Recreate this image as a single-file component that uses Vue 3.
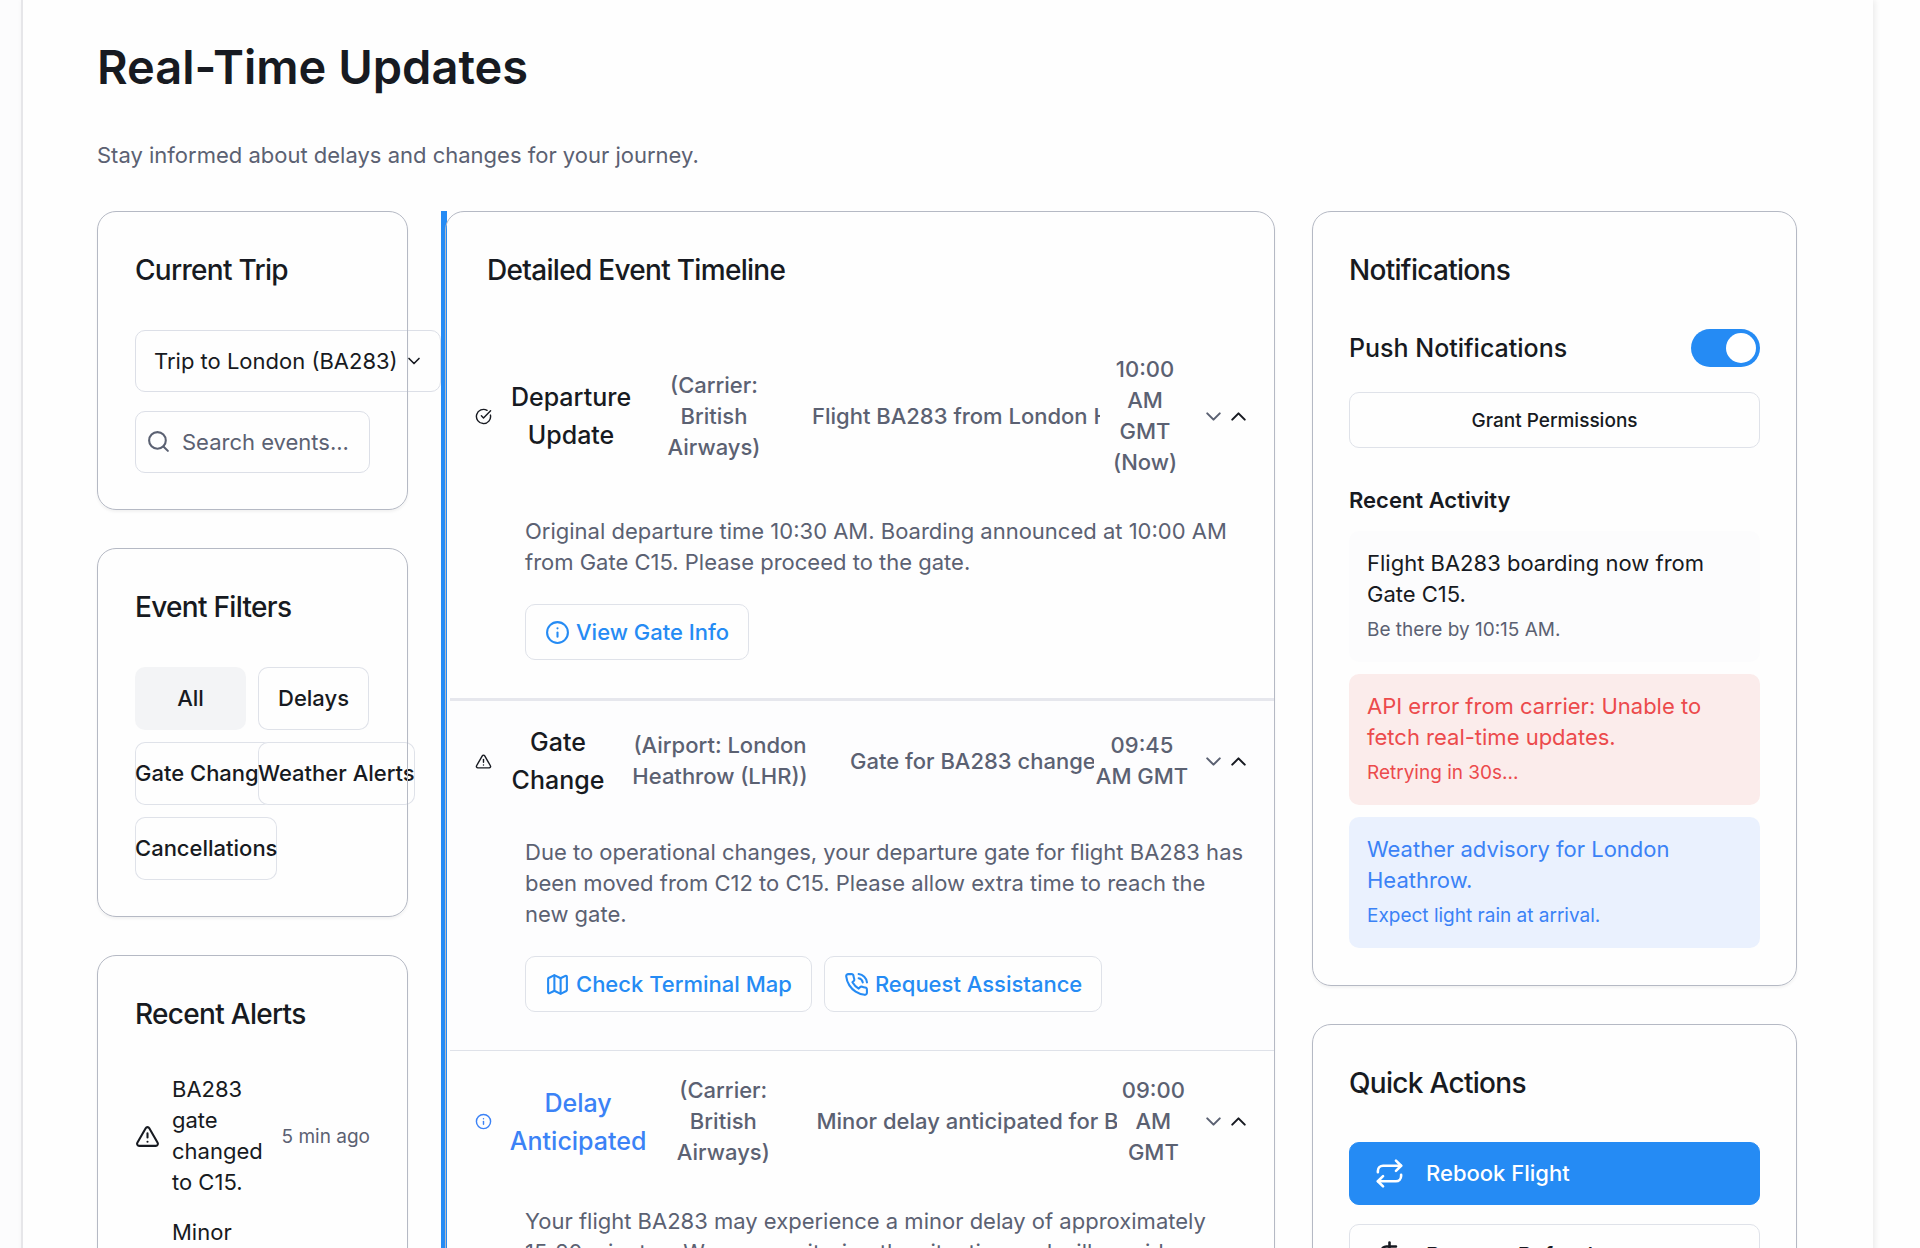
<script setup>
import { ref } from 'vue'

const trip = ref('BA283')
const search = ref('')
const pushEnabled = ref(true)
const activeFilter = ref('All')

const filters = ['All', 'Delays', 'Gate Changes', 'Weather Alerts', 'Cancellations']

const alerts = [
  { id: 1, text: 'BA283 gate changed to C15.', time: '5 min ago' },
  { id: 2, text: 'Minor delay anticipated.', time: '30 min ago' }
]

const events = [
  {
    id: 1,
    kind: 'departure',
    icon: 'check',
    title: 'Departure Update',
    source: '(Carrier: British Airways)',
    summary: 'Flight BA283 from London Heathrow',
    time: '10:00 AM GMT (Now)',
    body: 'Original departure time 10:30 AM. Boarding announced at 10:00 AM from Gate C15. Please proceed to the gate.',
    actions: [{ icon: 'info', label: 'View Gate Info' }]
  },
  {
    id: 2,
    kind: 'gate',
    icon: 'warning',
    title: 'Gate Change',
    source: '(Airport: London Heathrow (LHR))',
    summary: 'Gate for BA283 changed to C15',
    time: '09:45 AM GMT',
    body: 'Due to operational changes, your departure gate for flight BA283 has been moved from C12 to C15. Please allow extra time to reach the new gate.',
    actions: [
      { icon: 'map', label: 'Check Terminal Map' },
      { icon: 'phone', label: 'Request Assistance' }
    ]
  },
  {
    id: 3,
    kind: 'delay',
    icon: 'info',
    title: 'Delay Anticipated',
    source: '(Carrier: British Airways)',
    summary: 'Minor delay anticipated for BA283',
    time: '09:00 AM GMT',
    // non-breaking hyphen keeps the range on one line
    body: 'Your flight BA283 may experience a minor delay of approximately 15\u201120 minutes. We are monitoring the situation and will provide updates.',
    actions: []
  }
]

const activity = [
  { id: 1, tone: 'plain', text: 'Flight BA283 boarding now from Gate C15.', note: 'Be there by 10:15 AM.' },
  { id: 2, tone: 'error', text: 'API error from carrier: Unable to fetch real-time updates.', note: 'Retrying in 30s...' },
  { id: 3, tone: 'info', text: 'Weather advisory for London Heathrow.', note: 'Expect light rain at arrival.' }
]

const icons = {
  check: ['M21.8 10A10 10 0 1 1 17 3.34', 'm9 11 3 3L22 4'],
  warning: ['m21.73 18-8-14a2 2 0 0 0-3.48 0l-8 14A2 2 0 0 0 4 21h16a2 2 0 0 0 1.73-3', 'M12 9v4', 'M12 17h.01'],
  info: ['M12 2a10 10 0 1 0 0 20a10 10 0 1 0 0-20', 'M12 16v-4', 'M12 8h.01'],
  map: [
    'M14.1 5.55a2 2 0 0 0 1.8 0l3.65-1.83A1 1 0 0 1 21 4.62v12.76a1 1 0 0 1-.55.9l-4.55 2.27a2 2 0 0 1-1.8 0l-4.2-2.1a2 2 0 0 0-1.8 0l-3.65 1.83A1 1 0 0 1 3 19.38V6.62a1 1 0 0 1 .55-.9L8.1 3.45a2 2 0 0 1 1.8 0z',
    'M15 5.76v15',
    'M9 3.24v15'
  ],
  phone: [
    'M22 16.92v3a2 2 0 0 1-2.18 2 19.79 19.79 0 0 1-8.63-3.07 19.5 19.5 0 0 1-6-6 19.79 19.79 0 0 1-3.07-8.67A2 2 0 0 1 4.11 2h3a2 2 0 0 1 2 1.72 12.84 12.84 0 0 0 .7 2.81 2 2 0 0 1-.45 2.11L8.09 9.91a16 16 0 0 0 6 6l1.27-1.27a2 2 0 0 1 2.11-.45 12.84 12.84 0 0 0 2.81.7A2 2 0 0 1 22 16.92z',
    'M14.05 2a9 9 0 0 1 8 7.94',
    'M14.05 6A5 5 0 0 1 18 10'
  ],
  search: ['M11 3a8 8 0 1 0 0 16a8 8 0 1 0 0-16', 'm21 21-4.3-4.3'],
  down: ['m6 9 6 6 6-6'],
  up: ['m18 15-6-6-6 6'],
  repeat: ['m17 2 4 4-4 4', 'M3 11v-1a4 4 0 0 1 4-4h14', 'm7 22-4-4 4-4', 'M21 13v1a4 4 0 0 1-4 4H3'],
  dollar: ['M12 2v20', 'M17 5H9.5a3.5 3.5 0 0 0 0 7h5a3.5 3.5 0 0 1 0 7H6']
}
</script>

<template>
  <div class="shell">
    <main class="page">
      <h1>Real-Time Updates</h1>
      <p class="lead">Stay informed about delays and changes for your journey.</p>

      <div class="columns">
        <!-- Left column -->
        <div class="stack">
          <section class="card">
            <h2>Current Trip</h2>
            <div class="select-wrap">
              <select v-model="trip" aria-label="Current trip">
                <option value="BA283">Trip to London (BA283)</option>
              </select>
              <svg class="icon select-icon" viewBox="0 0 24 24"><path v-for="d in icons.down" :key="d" :d="d" /></svg>
            </div>
            <div class="search-wrap">
              <svg class="icon search-icon" viewBox="0 0 24 24"><path v-for="d in icons.search" :key="d" :d="d" /></svg>
              <input v-model="search" type="text" placeholder="Search events..." aria-label="Search events" />
            </div>
          </section>

          <section class="card">
            <h2>Event Filters</h2>
            <div class="filters">
              <button
                v-for="name in filters"
                :key="name"
                type="button"
                class="filter"
                :class="{ 'active': name === activeFilter }"
                @click="activeFilter = name"
              >{{ name }}</button>
            </div>
          </section>

          <section class="card">
            <h2>Recent Alerts</h2>
            <ul class="alerts">
              <li v-for="alert in alerts" :key="alert.id">
                <svg class="icon" viewBox="0 0 24 24"><path v-for="d in icons.warning" :key="d" :d="d" /></svg>
                <span class="alert-text">{{ alert.text }}</span>
                <span class="alert-time">{{ alert.time }}</span>
              </li>
            </ul>
          </section>
        </div>

        <!-- Timeline -->
        <section class="card timeline">
          <h2>Detailed Event Timeline</h2>
          <article v-for="event in events" :key="event.id" class="event" :class="event.kind">
            <header class="event-head">
              <svg class="icon event-icon" viewBox="0 0 24 24"><path v-for="d in icons[event.icon]" :key="d" :d="d" /></svg>
              <h3>{{ event.title }}</h3>
              <span class="event-source">{{ event.source }}</span>
              <span class="event-summary">{{ event.summary }}</span>
              <span class="event-time">{{ event.time }}</span>
              <button type="button" class="event-toggle" aria-label="Toggle details">
                <svg class="icon muted" viewBox="0 0 24 24"><path v-for="d in icons.down" :key="d" :d="d" /></svg>
                <svg class="icon" viewBox="0 0 24 24"><path v-for="d in icons.up" :key="d" :d="d" /></svg>
              </button>
            </header>
            <div class="event-body">
              <p>{{ event.body }}</p>
              <div v-if="event.actions.length" class="event-actions">
                <button v-for="action in event.actions" :key="action.label" type="button" class="action">
                  <svg class="icon" viewBox="0 0 24 24"><path v-for="d in icons[action.icon]" :key="d" :d="d" /></svg>
                  {{ action.label }}
                </button>
              </div>
            </div>
          </article>
        </section>

        <!-- Right column -->
        <div class="stack">
          <section class="card side">
            <h2>Notifications</h2>
            <div class="push">
              <label for="push">Push Notifications</label>
              <input id="push" v-model="pushEnabled" type="checkbox" role="switch" class="switch" />
            </div>
            <button type="button" class="grant">Grant Permissions</button>
            <h4>Recent Activity</h4>
            <ul class="activity">
              <li v-for="item in activity" :key="item.id" :class="item.tone">
                <p>{{ item.text }}</p>
                <small>{{ item.note }}</small>
              </li>
            </ul>
          </section>

          <section class="card side">
            <h2>Quick Actions</h2>
            <div class="quick">
              <button type="button" class="quick-btn primary">
                <svg class="icon" viewBox="0 0 24 24"><path v-for="d in icons.repeat" :key="d" :d="d" /></svg>
                Rebook Flight
              </button>
              <button type="button" class="quick-btn">
                <svg class="icon" viewBox="0 0 24 24"><path v-for="d in icons.dollar" :key="d" :d="d" /></svg>
                Request Refund
              </button>
            </div>
          </section>
        </div>
      </div>
    </main>
  </div>
</template>

<style>
body {
  margin: 0;
  background: #fefefe;
}
</style>

<style scoped>
* {
  box-sizing: border-box;
}

.shell {
  height: 100vh;
  overflow: hidden;
  padding: 0 47px 0 21px;
  background: linear-gradient(90deg, #fcfcfd 21px, #fefefe 21px);
  color: #171a21;
  font-family: Inter, "Liberation Sans", sans-serif;
  font-size: 22px;
  line-height: 31px;
}

.page {
  min-height: 100vh;
  padding: 39px 76px 38px 74px;
  border-left: 2px solid #e6e6e9;
  background: #fefefe;
  box-shadow: 2px 0 6px rgba(0, 0, 0, 0.08);
}

h1, h2, h3, h4, p, ul {
  margin: 0;
  padding: 0;
}

ul {
  list-style: none;
}

button, input, select {
  font: inherit;
  color: inherit;
}

button {
  cursor: pointer;
}

h1 {
  margin-bottom: 45px;
  font-size: 47px;
  line-height: 56px;
  font-weight: 600;
}

.lead {
  margin-bottom: 40px;
  color: #5b6172;
}

.columns {
  display: grid;
  grid-template-columns: minmax(0, 311fr) minmax(0, 830fr) minmax(0, 485fr);
  gap: 37px;
  align-items: start;
}

.stack {
  display: flex;
  flex-direction: column;
  gap: 38px;
}

/* Cards: the outline is laid over whatever spills out of the card */
.card {
  position: relative;
  padding: 38px 38px 37px;
  border-radius: 19px;
  box-shadow: 0 2px 3px rgba(0, 0, 0, 0.05);
}

.card::after {
  content: '';
  position: absolute;
  inset: 0;
  border: 1px solid #b5b9c4;
  border-radius: 19px;
  pointer-events: none;
}

h2 {
  margin-bottom: 39px;
  font-size: 28px;
  line-height: 42px;
  font-weight: 500;
  letter-spacing: -0.025em;
}

.card.side {
  padding: 38px 37px;
}

.side h2 {
  margin-bottom: 38px;
}

.icon {
  flex: none;
  width: 25px;
  height: 25px;
  fill: none;
  stroke: currentColor;
  stroke-width: 2;
  stroke-linecap: round;
  stroke-linejoin: round;
}

/* Current trip */
.select-wrap,
.search-wrap {
  position: relative;
}

.select-wrap {
  width: 306px;
  margin-bottom: 19px;
}

select,
.search-wrap input {
  display: block;
  width: 100%;
  height: 62px;
  border: 1px solid #dcdfe7;
  border-radius: 10px;
  background: transparent;
  outline: none;
}

select {
  appearance: none;
  padding: 0 38px 0 18px;
}

.select-icon {
  position: absolute;
  top: 21px;
  right: 17px;
  width: 20px;
  height: 20px;
  pointer-events: none;
}

.search-wrap input {
  padding: 0 12px 0 46px;
}

.search-wrap input::placeholder {
  color: #5b6172;
  opacity: 1;
}

.search-icon {
  position: absolute;
  top: 18px;
  left: 11px;
  color: #5b6172;
}

/* Filters */
.filters {
  display: grid;
  grid-template-columns: repeat(2, minmax(0, 111px));
  gap: 12px;
}

.filter {
  min-width: 100%;
  width: max-content;
  height: 63px;
  padding: 0;
  border: 0;
  border-radius: 10px;
  background: #fefefe;
  box-shadow: inset 0 0 0 1px #dfe2e9;
  font-weight: 500;
}

.filter.active {
  background: #f3f4f6;
  box-shadow: none;
}

/* Alerts */
.alerts {
  display: flex;
  flex-direction: column;
  gap: 19px;
}

.alerts li {
  display: flex;
  align-items: center;
  gap: 12px;
}

.alert-text {
  flex: 1;
}

.alert-time {
  color: #5b6172;
  font-size: 19px;
  white-space: nowrap;
}

/* Timeline */
.timeline {
  padding: 38px 0 0 5px;
}

.timeline::before {
  content: '';
  position: absolute;
  top: 0;
  bottom: 0;
  left: -4px;
  width: 6px;
  background: #258bf4;
}

.timeline h2 {
  padding: 0 37px;
}

.event {
  padding: 24px 24px 38px 25px;
}

.event + .event {
  border-top: 1px solid #dfe2e9;
}

.event.gate {
  border-top: 3px solid #e6e7ed;
  padding-top: 22px;
  background: #fdfdfe;
}

.event-head {
  display: grid;
  align-items: center;
  margin-bottom: 38px;
  color: #5b6172;
  font-weight: 500;
  text-align: center;
}

.departure .event-head {
  grid-template-columns: 27fr 138fr 148fr 312fr 90fr 61fr;
}

.gate .event-head {
  grid-template-columns: 27fr 112fr 212fr 268fr 96fr 61fr;
}

.delay .event-head {
  grid-template-columns: 27fr 152fr 138fr 324fr 73fr 61fr;
}

.event-head > * {
  min-width: 0;
}

.event-icon {
  width: 17px;
  height: 17px;
  color: #171a21;
}

h3 {
  color: #171a21;
  font-size: 25px;
  line-height: 38px;
  font-weight: 500;
}

.delay h3,
.delay .event-icon {
  color: #3b82f6;
}

.event-summary {
  margin-left: 24px;
  overflow: hidden;
  text-align: left;
  white-space: nowrap;
}

.departure .event-time {
  width: min-content;
  justify-self: center;
}

.event-toggle {
  display: flex;
  justify-content: flex-end;
  padding: 0;
  border: 0;
  background: none;
  color: #171a21;
}

.icon.muted {
  color: #5b6172;
}

.event-body {
  padding-left: 50px;
  color: #5b6172;
}

.event-actions {
  display: flex;
  gap: 12px;
  margin-top: 26px;
}

.action {
  display: flex;
  align-items: center;
  gap: 6px;
  height: 56px;
  padding: 0 19px;
  border: 1px solid #dfe2e9;
  border-radius: 10px;
  background: #fefefe;
  color: #258bf4;
  font-weight: 500;
}

/* Notifications */
.push {
  display: flex;
  align-items: flex-start;
  justify-content: space-between;
  margin-bottom: 25px;
  font-size: 25px;
  line-height: 38px;
  font-weight: 500;
}

.switch {
  appearance: none;
  display: flex;
  width: 69px;
  height: 38px;
  margin: 0;
  padding: 4px;
  border-radius: 19px;
  background: #dfe2e9;
  cursor: pointer;
}

.switch::before {
  content: '';
  width: 30px;
  height: 30px;
  border-radius: 50%;
  background: #fff;
}

.switch:checked {
  justify-content: flex-end;
  background: #258bf4;
}

.grant {
  width: 100%;
  height: 56px;
  margin-bottom: 37px;
  border: 1px solid #dfe2e9;
  border-radius: 10px;
  background: #fefefe;
  font-size: 19px;
  font-weight: 500;
}

h4 {
  margin-bottom: 15px;
  font-size: 22px;
  font-weight: 600;
}

.activity {
  display: flex;
  flex-direction: column;
  gap: 12px;
}

.activity li {
  padding: 17px 18px 19px;
  border-radius: 10px;
}

.activity small {
  display: block;
  margin-top: 7px;
  font-size: 19px;
  line-height: 26px;
}

.activity .plain {
  background: #fcfcfd;
}

.plain small {
  color: #5b6172;
}

.activity .error {
  background: #fbeceb;
  color: #ec4a4c;
}

.activity .info {
  background: #eaf1fe;
  color: #3b82f6;
}

/* Quick actions */
.quick {
  display: flex;
  flex-direction: column;
  gap: 19px;
}

.quick-btn {
  display: flex;
  align-items: center;
  gap: 21px;
  width: 100%;
  height: 63px;
  padding: 0 24px;
  border: 1px solid #dfe2e9;
  border-radius: 10px;
  background: #fefefe;
  font-weight: 500;
}

.quick-btn .icon {
  width: 31px;
  height: 31px;
}

.quick-btn.primary {
  border-color: #258bf4;
  background: #258bf4;
  color: #fff;
}
</style>
